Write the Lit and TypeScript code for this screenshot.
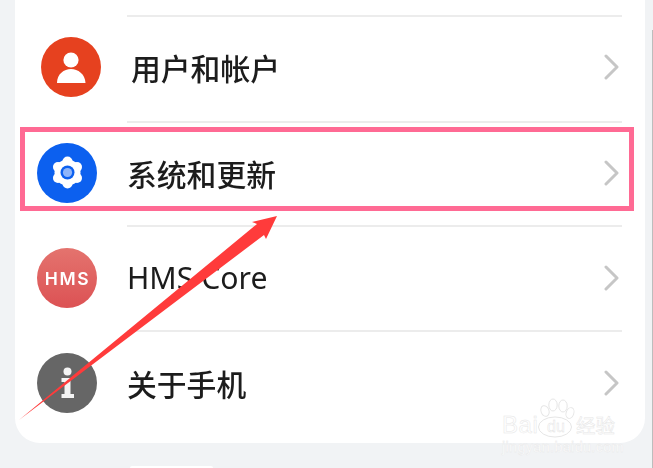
import { LitElement, html, css, svg } from "lit";
import { customElement } from "lit/decorators.js";

const chevron = html`<svg class="chev" viewBox="0 0 15 26" aria-hidden="true"><path d="M2 2 L13 13 L2 24" fill="none" stroke="#c6c6c6" stroke-width="3" stroke-linecap="round" stroke-linejoin="round"/></svg>`;

const userIcon = html`<svg class="ic" viewBox="0 0 60 60"><circle cx="30" cy="30" r="30" fill="#e6411f"/><circle cx="30" cy="23" r="7.6" fill="#fff"/><path d="M16 46 C16 37 23 32 30 32 C37 32 44 37 44.500 46 Q44.500 46 41 46 L19 46 Q16 46 16 46 Z" fill="#fff"/></svg>`;

const lobes = [90, 150, 210, 270, 330, 30].map((a) => {
  const r = (a * Math.PI) / 180;
  return svg`<circle cx=${30.5 + 11 * Math.cos(r)} cy=${29.5 + 11 * Math.sin(r)} r="5" fill="#fff"/>`;
});
const gearIcon = html`<svg class="ic" viewBox="0 0 60 60"><circle cx="30" cy="30" r="30" fill="#0c60ef"/>${lobes}<circle cx="30.500" cy="29.500" r="13" fill="#fff"/><circle cx="30.500" cy="29.500" r="7" fill="#0c60ef"/><circle cx="30.500" cy="29.500" r="4.600" fill="#8fb5fa"/></svg>`;

const hmsIcon = html`<svg class="ic" viewBox="0 0 60 60"><defs><linearGradient id="hg" x1="0" y1="0" x2="0" y2="1"><stop offset="0" stop-color="#e4736e"/><stop offset="1" stop-color="#dc5254"/></linearGradient></defs><circle cx="30" cy="30" r="30" fill="url(#hg)"/><text class="hms" x="30.500" y="36.500" text-anchor="middle">HMS</text></svg>`;

const infoIcon = html`<svg class="ic" viewBox="0 0 60 60"><circle cx="30" cy="30" r="30" fill="#666"/><circle cx="30.500" cy="18.500" r="4" fill="#f4f4f4"/><path d="M24.500 25 H33.500 V41 H37 V45 H24.500 V41 H27.500 V29 H24.500 Z" fill="#f4f4f4"/></svg>`;

const paw = html`<svg class="paw" viewBox="0 0 38 42" aria-hidden="true"><g fill="#fff" stroke="#e6e6e6" stroke-width="1"><ellipse cx="8" cy="14" rx="4" ry="5.500" transform="rotate(-20 8 14)"/><ellipse cx="16" cy="8" rx="4.200" ry="6"/><ellipse cx="26" cy="9" rx="4.200" ry="6"/><ellipse cx="33" cy="16" rx="3.800" ry="5.500" transform="rotate(20 33 16)"/><ellipse cx="18" cy="30" rx="16.500" ry="10"/></g></svg>`;

@customElement("app-root")
export class AppRoot extends LitElement {
  static styles = css`
    :host {
      display: block;
      position: relative;
      width: 653px;
      height: 468px;
      overflow: hidden;
      background: #f1f3f5;
      font-family: "Noto Sans CJK SC", "Noto Sans", sans-serif;
    }
    .page { display: flex; flex-direction: column; height: 468px; filter: blur(0.5px); }
    .card {
      flex: none;
      width: 630px;
      height: 443px;
      margin-left: 15px;
      padding-top: 15px;
      box-sizing: border-box;
      background: #fff;
      border-radius: 0 0 25px 25px;
      display: flex;
      flex-direction: column;
    }
    .div { height: 2px; margin: 0 23px 0 112px; background: #ececec; flex: none; }
    .div.gap4 { margin-top: 4px; }
    .div.gap2 { margin-top: 2px; }
    .div.gap1 { margin-top: 1px; }
    .row { display: flex; align-items: center; gap: 31px; padding: 0 26px 0 22px; flex: none; }
    .row.h100 { height: 100px; }
    .row.h102 { height: 102px; }
    .row.first { padding-left: 26px; }
    .ic { width: 60px; height: 60px; flex: none; display: block; }
    .hms { font: 600 17.5px "Inter", sans-serif; letter-spacing: 1.6px; fill: #fff; }
    .label { flex: 1; font-size: 29.8px; font-weight: 500; line-height: 40px; color: #1c1c1c; white-space: nowrap; margin-left: -1px; }
    .label.lat { font-family: "Noto Sans", sans-serif; font-size: 30.2px; font-weight: 400; }
    .chev { width: 15px; height: 26px; flex: none; }
    .home { width: 83px; height: 2px; margin: 23px 0 0 130px; background: #fff; border-radius: 3px 3px 0 0; flex: none; }
    .scroll { position: absolute; right: 0; top: 30px; width: 1.5px; height: 438px; background: #bdbdbd; }
    .box {
      position: absolute;
      left: 20px;
      top: 127px;
      width: 614px;
      height: 84px;
      box-sizing: border-box;
      border: 5.5px solid #ff6a94;
    }
    .arrow { position: absolute; left: 0; top: 0; width: 653px; height: 468px; pointer-events: none; }
    .wm { position: absolute; left: 500px; top: 395px; width: 120px; height: 58px; font-family: "Liberation Sans", sans-serif; color: #fff; -webkit-text-stroke: 0.5px #e6e6e6; }
    .paw { position: absolute; left: 37px; top: 2px; width: 38px; height: 42px; }
    .bai { position: absolute; left: 2px; top: 17px; font-size: 24px; line-height: 26px; letter-spacing: 0.6px; }
    .du { position: absolute; left: 47px; top: 23px; font-size: 16px; line-height: 18px; -webkit-text-stroke: 0.4px #dedede; }
    .jy { position: absolute; left: 76px; top: 19px; font-family: "Noto Sans CJK SC", sans-serif; font-size: 19.5px; line-height: 22px; }
    .url { position: absolute; left: 2px; top: 44px; font-size: 14.4px; line-height: 16px; letter-spacing: 0.35px; white-space: nowrap; -webkit-text-stroke: 0.35px #e6e6e6; }
  `;

  render() {
    return html`
      <div class="page">
        <div class="card">
          <div class="div"></div>
          <div class="row h100 first">${userIcon}<span class="label">用户和帐户</span>${chevron}</div>
          <div class="div gap4"></div>
          <div class="row h100">${gearIcon}<span class="label">系统和更新</span>${chevron}</div>
          <div class="div gap2"></div>
          <div class="row h102">${hmsIcon}<span class="label lat">HMS Core</span>${chevron}</div>
          <div class="div gap1"></div>
          <div class="row h102">${infoIcon}<span class="label">关于手机</span>${chevron}</div>
        </div>
        <div class="home"></div>
      </div>
      <div class="scroll"></div>
      <div class="box"></div>
      <svg class="arrow" viewBox="0 0 653 468" aria-hidden="true"><polygon points="19,420 257,224 252,222 277,216 266,239 264,235" fill="#ff3b3b"/></svg>
      <div class="wm">
        ${paw}
        <span class="bai">Bai</span>
        <span class="du">du</span>
        <span class="jy">经验</span>
        <span class="url">jingyan.baidu.com</span>
      </div>
    `;
  }
}
